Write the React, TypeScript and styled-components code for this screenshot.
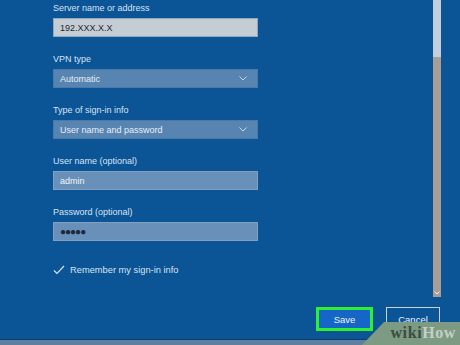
import styled, { createGlobalStyle } from 'styled-components';

const Global = createGlobalStyle`
  html, body {
    margin: 0;
    padding: 0;
    background: #0b5496;
    overflow: hidden;
  }
  * { box-sizing: border-box; }
`;

const Page = styled.div`
  position: relative;
  width: 460px;
  height: 345px;
  background: #0b5496;
  font-family: 'Liberation Sans', Arial, sans-serif;
  display: flex;
  flex-direction: column;
`;

const Body = styled.div`
  display: flex;
  height: 297px;
`;

const Form = styled.div`
  flex: 1;
  padding: 2px 0 0 53px;
  display: flex;
  flex-direction: column;
`;

const Field = styled.div`
  display: flex;
  flex-direction: column;
  gap: 4px;
  margin-bottom: 16px;
`;

const Label = styled.div`
  color: #d6e3f1;
  font-size: 9px;
  line-height: 12px;
`;

const Box = styled.div<{ $variant: 'text' | 'select' | 'dim' }>`
  width: 205px;
  height: 19px;
  display: flex;
  align-items: center;
  justify-content: space-between;
  padding: 0 10px 0 6px;
  font-size: 9px;
  border: 1px solid
    ${({ $variant }) => ($variant === 'text' ? '#8fa8bf' : $variant === 'select' ? '#4b79a8' : '#80a0c0')};
  background: ${({ $variant }) =>
    $variant === 'text' ? '#c6ccd3' : $variant === 'select' ? '#5884b2' : '#6990b8'};
  color: ${({ $variant }) => ($variant === 'text' ? '#1c2a38' : $variant === 'select' ? '#e6eef6' : '#f2f6fa')};
`;

const Dots = styled.span`
  font-size: 10px;
  letter-spacing: -1px;
  color: #1a2a3a;
`;

const Check = styled.div`
  display: flex;
  align-items: center;
  gap: 5px;
  margin-top: 8px;
  color: #d6e3f1;
  font-size: 9.3px;
`;

const ScrollTrack = styled.div`
  width: 8px;
  margin: 0 19px 0 0;
  display: flex;
  flex-direction: column;
`;

const Thumb = styled.div`
  height: 57px;
  background: #c2cfdc;
`;

const Rail = styled.div`
  flex: 1;
  background: #a99d97;
  display: flex;
  align-items: flex-end;
  justify-content: center;
  padding-bottom: 2px;
`;

const Footer = styled.div`
  flex: 1;
  display: flex;
  justify-content: flex-end;
  align-items: flex-start;
  gap: 13px;
  padding: 10px 20px 0 0;
`;

const BottomStrip = styled.div`
  height: 6px;
  background: #5e7f9f;
  border-top: 1px solid #0a3e6e;
`;

const Button = styled.div<{ $primary?: boolean }>`
  width: ${({ $primary }) => ($primary ? '57px' : '54px')};
  height: 24px;
  display: flex;
  align-items: center;
  justify-content: center;
  font-size: 9.5px;
  color: #eef4fa;
  background: ${({ $primary }) => ($primary ? '#1566c6' : 'transparent')};
  border: ${({ $primary }) => ($primary ? '3px solid #2ef02e' : '1px solid #c6d3e0')};
`;

const Watermark = styled.div`
  position: absolute;
  right: 0;
  bottom: 0;
  width: 98px;
  height: 23px;
  background: #7d9a83;
  clip-path: polygon(22px 0, 100% 0, 100% 100%, 0 100%);
  display: flex;
  align-items: center;
  justify-content: flex-end;
  padding: 0 4px 2px 0;
  font-family: 'Liberation Serif', serif;
  font-weight: bold;
  font-size: 16px;
  letter-spacing: 0.6px;
`;

const Wiki = styled.span`
  color: #3c4c40;
`;

const How = styled.span`
  color: #c3d0c6;
`;

const Chevron = () => (
  <svg width="8" height="5" viewBox="0 0 8 5">
    <path d="M0.5 0.5 L4 4 L7.5 0.5" fill="none" stroke="#c8d6e4" strokeWidth="1" />
  </svg>
);

const CheckMark = () => (
  <svg width="12" height="10" viewBox="0 0 12 10">
    <path d="M1 5.5 L4 8.5 L11 1" fill="none" stroke="#d6e3f1" strokeWidth="1.2" />
  </svg>
);

const fields: { label: string; value: string; variant: 'text' | 'select' | 'dim'; pw?: boolean }[] = [
  { label: 'Server name or address', value: '192.XXX.X.X', variant: 'text' },
  { label: 'VPN type', value: 'Automatic', variant: 'select' },
  { label: 'Type of sign-in info', value: 'User name and password', variant: 'select' },
  { label: 'User name (optional)', value: 'admin', variant: 'dim' },
  { label: 'Password (optional)', value: '●●●●●', variant: 'dim', pw: true },
];

export default function App() {
  return (
    <Page>
      <Global />
      <Body>
        <Form>
          {fields.map((f) => (
            <Field key={f.label}>
              <Label>{f.label}</Label>
              <Box $variant={f.variant}>
                {f.pw ? <Dots>{f.value}</Dots> : <span>{f.value}</span>}
                {f.variant === 'select' && <Chevron />}
              </Box>
            </Field>
          ))}
          <Check>
            <CheckMark />
            Remember my sign-in info
          </Check>
        </Form>
        <ScrollTrack>
          <Thumb />
          <Rail>
            <svg width="6" height="4" viewBox="0 0 6 4">
              <path d="M0.5 0.5 L3 3 L5.5 0.5" fill="none" stroke="#eee" strokeWidth="1" />
            </svg>
          </Rail>
        </ScrollTrack>
      </Body>
      <Footer>
        <Button $primary>Save</Button>
        <Button>Cancel</Button>
      </Footer>
      <BottomStrip />
      <Watermark>
        <Wiki>wiki</Wiki>
        <How>How</How>
      </Watermark>
    </Page>
  );
}
